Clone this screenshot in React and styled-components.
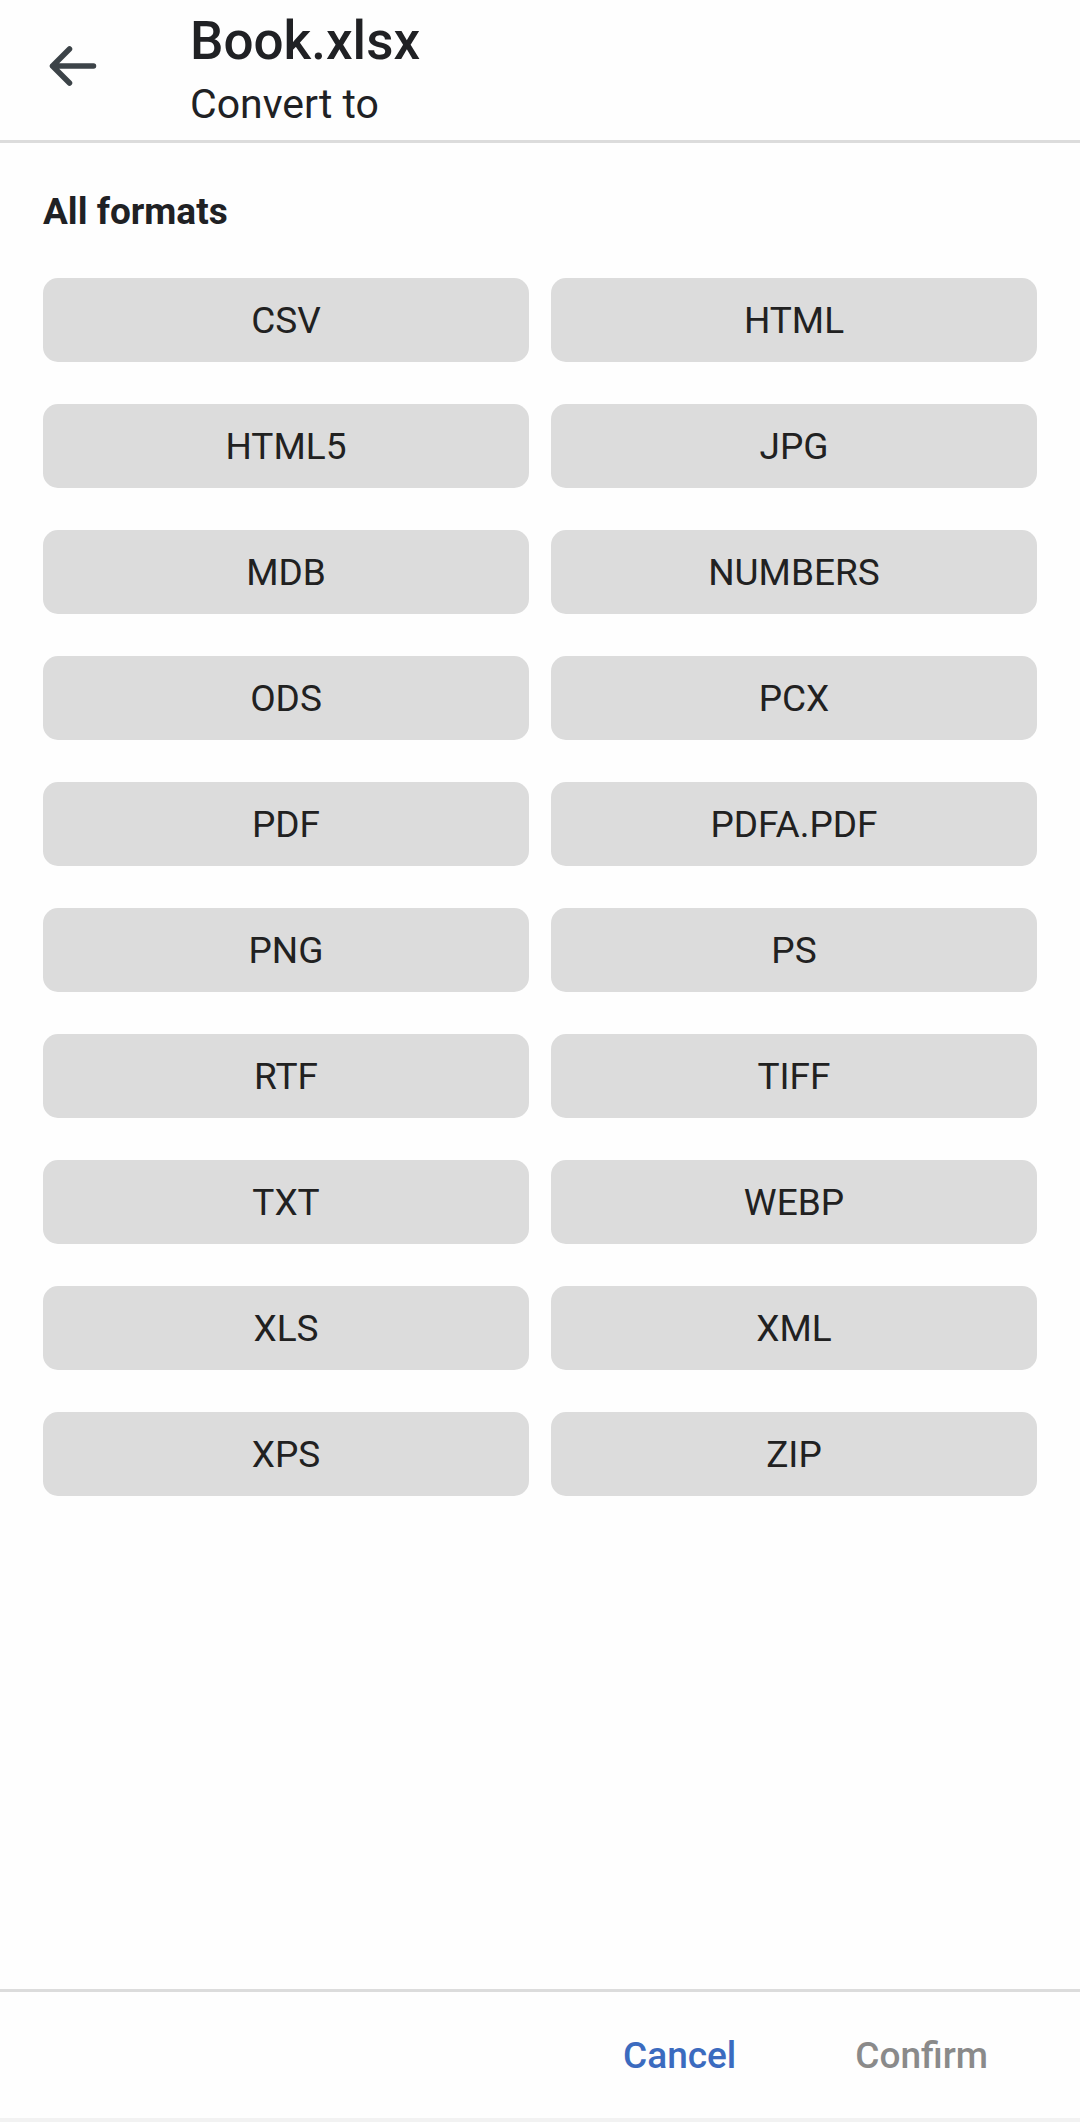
import React from "react"
import styled, { createGlobalStyle } from "styled-components"

const formats = [
    "CSV", "HTML", "HTML5", "JPG", "MDB", "NUMBERS", "ODS", "PCX",
    "PDF", "PDFA.PDF", "PNG", "PS", "RTF", "TIFF", "TXT", "WEBP",
    "XLS", "XML", "XPS", "ZIP",
]

export default function App() {
    return (
        <>
            <GlobalStyle />
            <Page>
                <Header>
                    <BackButton aria-label="Back">
                        <svg width="60" height="60" viewBox="0 0 60 60">
                            <path
                                d="M12.5 30 L53.5 30 M29.5 13 L12.5 30 L29.5 47"
                                fill="none"
                                stroke="#3c4348"
                                strokeWidth="5.5"
                                strokeLinecap="round"
                                strokeLinejoin="round"
                            />
                        </svg>
                    </BackButton>
                    <TitleBlock>
                        <Title>Book.xlsx</Title>
                        <Subtitle>Convert to</Subtitle>
                    </TitleBlock>
                </Header>

                <Content>
                    <SectionLabel>All formats</SectionLabel>
                    <FormatGrid>
                        {formats.map((f) => (
                            <FormatButton key={f}>{f}</FormatButton>
                        ))}
                    </FormatGrid>
                </Content>

                <Footer>
                    <Action $primary>Cancel</Action>
                    <Action>Confirm</Action>
                </Footer>
                <NavStrip />
            </Page>
        </>
    )
}

const GlobalStyle = createGlobalStyle`
    * {
        box-sizing: border-box;
    }
    body {
        margin: 0;
        background: #ffffff;
        font-family: Roboto, "Liberation Sans", sans-serif;
    }
`

const Page = styled.div`
    width: 1080px;
    min-height: 2122px;
    display: flex;
    flex-direction: column;
    background: #fefefe;
`

const Header = styled.div`
    height: 143px;
    display: flex;
    flex-direction: row;
    align-items: flex-start;
    padding-left: 40px;
    border-bottom: 3px solid #dcdcdc;
`

const BackButton = styled.div`
    width: 60px;
    height: 60px;
    margin-top: 36px;
    display: flex;
    align-items: center;
    justify-content: center;
`

const TitleBlock = styled.div`
    display: flex;
    flex-direction: column;
    margin-left: 90px;
    padding-top: 11px;
`

const Title = styled.div`
    font-size: 53px;
    line-height: 60px;
    font-weight: 500;
    color: #202124;
`

const Subtitle = styled.div`
    margin-top: 10px;
    font-size: 41px;
    line-height: 46px;
    font-weight: 400;
    color: #202124;
`

const Content = styled.div`
    flex: 1;
    padding: 47px 43px 0 43px;
`

const SectionLabel = styled.div`
    font-size: 37px;
    line-height: 44px;
    font-weight: 700;
    color: #202124;
`

const FormatGrid = styled.div`
    margin-top: 44px;
    display: grid;
    grid-template-columns: 1fr 1fr;
    column-gap: 22px;
    row-gap: 42px;
`

const FormatButton = styled.div`
    height: 84px;
    border-radius: 15px;
    background: #dcdcdc;
    display: flex;
    align-items: center;
    justify-content: center;
    font-size: 37px;
    font-weight: 400;
    color: #212121;
`

const Footer = styled.div`
    height: 129px;
    border-top: 3px solid #dcdcdc;
    display: flex;
    flex-direction: row;
    justify-content: flex-end;
    align-items: center;
    gap: 119px;
    padding-right: 92px;
`

const Action = styled.div`
    font-size: 37px;
    font-weight: 500;
    color: ${(props) => (props.$primary ? "#3b6bbf" : "#8a8a8a")};
`

const NavStrip = styled.div`
    height: 4px;
    background: #f2f2f2;
`
